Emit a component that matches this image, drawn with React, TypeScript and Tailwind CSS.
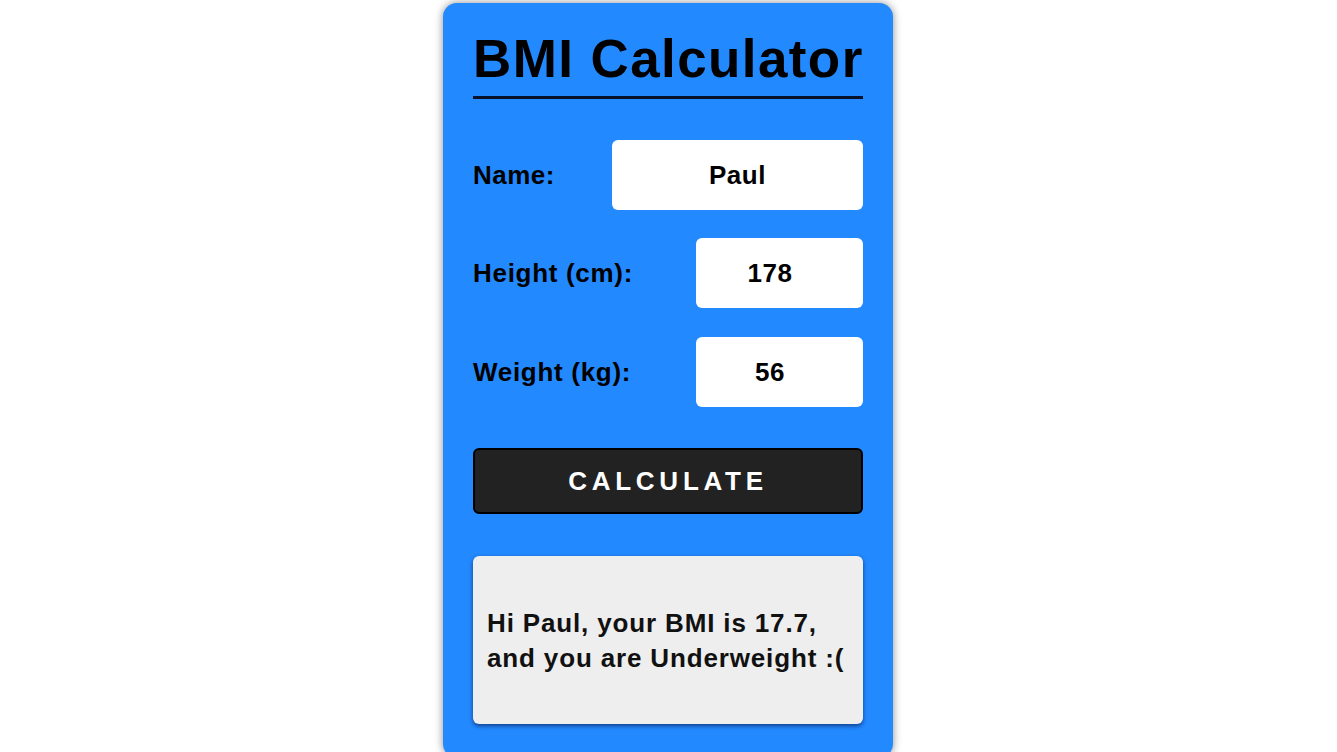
import React from "react";

export default function App() {
  const font = { fontFamily: '"Liberation Sans", Arial, sans-serif' };
  return (
    <div className="w-full h-[752px] overflow-hidden bg-white flex justify-center" style={font}>
      <div className="w-[450px] h-[755px] mt-[3px] mr-[1px] shrink-0 bg-[#2289ff] rounded-[14px] shadow-[0_0_8px_rgba(0,0,0,0.45)] px-[30px] pt-[27px] flex flex-col">
        <h1 className="text-[53px] leading-[58px] font-bold text-black tracking-[1.4px] whitespace-nowrap border-b-[3px] border-[#06122a] pb-[8px]">
          BMI Calculator
        </h1>

        <div className="mt-[41px] flex flex-col gap-[28px]">
          <div className="flex items-center justify-between h-[70px]">
            <label className="text-[26px] font-bold text-black tracking-[0.5px]">Name:</label>
            <input
              type="text"
              readOnly
              value="Paul"
              className="w-[251px] h-[70px] rounded-[6px] bg-white text-center text-[26px] font-bold text-black tracking-[0.5px] outline-none"
              style={font}
            />
          </div>
          <div className="flex items-center justify-between h-[70px]">
            <label className="text-[26px] font-bold text-black tracking-[0.7px]">Height (cm):</label>
            <input
              type="text"
              readOnly
              value="178"
              className="w-[167px] h-[70px] rounded-[6px] bg-white text-center pr-[19px] text-[26px] font-bold text-black tracking-[0.5px] outline-none"
              style={font}
            />
          </div>
          <div className="flex items-center justify-between h-[70px] mt-[1px]">
            <label className="text-[26px] font-bold text-black tracking-[0.7px]">Weight (kg):</label>
            <input
              type="text"
              readOnly
              value="56"
              className="w-[167px] h-[70px] rounded-[6px] bg-white text-center pr-[19px] text-[26px] font-bold text-black tracking-[0.5px] outline-none"
              style={font}
            />
          </div>
        </div>

        <button
          className="mt-[41px] h-[66px] w-full bg-[#222222] border-2 border-black rounded-[6px] text-white text-[26px] font-bold tracking-[4.75px] pl-0"
          style={font}
        >
          CALCULATE
        </button>

        <div className="mt-[42px] h-[168px] w-full bg-[#eeeeee] rounded-[6px] shadow-[0_2px_4px_rgba(0,0,40,0.55)] flex items-center px-[14px]">
          <p className="text-[26px] leading-[35px] font-bold text-[#111] tracking-[0.85px] pt-[2px] whitespace-nowrap">
            Hi Paul, your BMI is 17.7,
            <br />
            and you are Underweight :(
          </p>
        </div>
      </div>
    </div>
  );
}
